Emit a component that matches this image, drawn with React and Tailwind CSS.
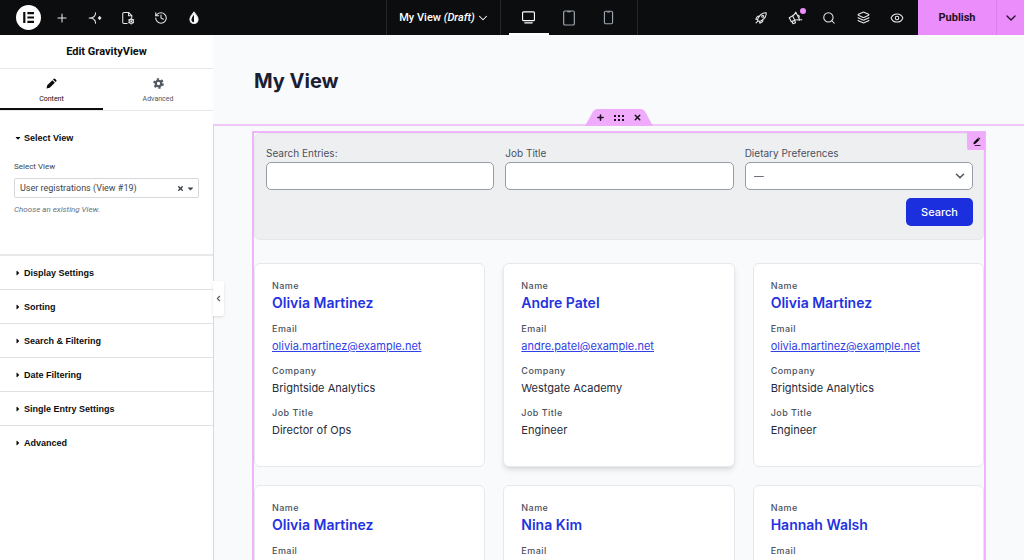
import React from 'react';
import { Plus, ChevronDown, ChevronLeft, X, Search, Layers, Eye, History } from 'lucide-react';
import { FaCaretDown, FaCaretRight } from 'react-icons/fa';

const sections = [
  'Display Settings',
  'Sorting',
  'Search & Filtering',
  'Date Filtering',
  'Single Entry Settings',
  'Advanced',
];

const entries = [
  { name: 'Olivia Martinez', email: 'olivia.martinez@example.net', company: 'Brightside Analytics', job: 'Director of Ops' },
  { name: 'Andre Patel', email: 'andre.patel@example.net', company: 'Westgate Academy', job: 'Engineer', raised: true },
  { name: 'Olivia Martinez', email: 'olivia.martinez@example.net', company: 'Brightside Analytics', job: 'Engineer' },
  { name: 'Olivia Martinez', email: 'olivia.martinez@example.net', company: 'Brightside Analytics', job: 'Engineer' },
  { name: 'Nina Kim', email: 'nina.kim@example.net', company: 'Westgate Academy', job: 'Designer' },
  { name: 'Hannah Walsh', email: 'hannah.walsh@example.net', company: 'Brightside Analytics', job: 'Manager' },
];

function Icon({ className = 'size-[14px]', children }) {
  return (
    <svg
      viewBox="0 0 24 24"
      fill="none"
      stroke="currentColor"
      strokeWidth="1.8"
      strokeLinecap="round"
      strokeLinejoin="round"
      className={className}
      aria-hidden="true"
    >
      {children}
    </svg>
  );
}

function BarButton({ label, width = 'w-[33px]', children }) {
  return (
    <button type="button" aria-label={label} className={`${width} relative flex h-full items-center justify-center text-[#e6e8ea]`}>
      {children}
    </button>
  );
}

function TopBar() {
  return (
    <header className="grid h-[35px] shrink-0 grid-cols-[1fr_auto_1fr] bg-[#0c0d0e]">
      {/* Left tools */}
      <div className="flex items-center pl-3">
        <BarButton label="Elementor menu">
          <svg viewBox="0 0 25 25" className="size-[25px]" aria-hidden="true">
            <circle cx="12.5" cy="12.5" r="12.5" fill="#fff" />
            <path d="M7.2 7h2.2v11H7.2zM11.4 7h6.6v2.2h-6.6zM11.4 11.4h6.6v2.2h-6.6zM11.4 15.8h6.6V18h-6.6z" fill="#0c0d0e" />
          </svg>
        </BarButton>
        <BarButton label="Add element">
          <Plus className="size-[14px]" strokeWidth={1.8} />
        </BarButton>
        <BarButton label="AI">
          <Icon>
            <path d="M13 3c0 5.500-3 9-11 9 8 0 11 3.500 11 9" />
            <path d="M20 9.600l2.200 2.400-2.200 2.400-2.200-2.400z" fill="currentColor" />
          </Icon>
        </BarButton>
        <BarButton label="Page settings">
          <Icon>
            <path d="M10.500 21.500H5a2 2 0 0 1-2-2v-15a2 2 0 0 1 2-2h8l5.500 5.500v3" />
            <path d="M13 2.500V8h5.500" />
            <circle cx="17.500" cy="17.500" r="3.600" />
            <circle cx="17.500" cy="17.500" r=".8" />
            <path d="M17.500 12.600v1.300M17.500 21.100v1.300M13.300 15l1.100.7M20.600 19.300l1.100.7M13.300 20l1.100-.7M20.600 15.700l1.100-.7" />
          </Icon>
        </BarButton>
        <BarButton label="History">
          <History className="size-[14px]" strokeWidth={1.8} />
        </BarButton>
        <BarButton label="Site styles">
          <Icon>
            <path d="M12 2c3.500 4.500 7 8 7 12.500a7 7 0 0 1-14 0C5 10 8.500 6.500 12 2z" fill="#fff" />
            <path d="M12 6.500v12.800a4.300 4.300 0 0 1-4.300-4.600c0-2.700 1.800-5 4.300-8.200z" fill="#0c0d0e" stroke="none" />
          </Icon>
        </BarButton>
      </div>

      {/* Document and devices */}
      <div className="flex border-x border-[#26282b]">
        <button type="button" className="flex items-center gap-px pr-[10px] pl-3 text-[11px] leading-4 font-medium text-white">
          <span>
            My View <em>(Draft)</em>
          </span>
          <ChevronDown className="size-[14px]" strokeWidth={1.8} />
        </button>
        <div className="flex border-l border-[#26282b] px-2">
          <button type="button" aria-label="Desktop" className="flex w-10 items-center justify-center border-y-2 border-t-transparent border-b-white text-white">
            <Icon className="size-[15px]">
              <rect x="2.500" y="3" width="19" height="14" rx="1.500" />
              <path d="M6 20.500h12" />
            </Icon>
          </button>
          <button type="button" aria-label="Tablet" className="flex w-10 items-center justify-center text-[#9da5ae]">
            <Icon className="size-4">
              <rect x="4" y="1.500" width="16" height="21" rx="2" />
              <path d="M10 2.500h4" />
            </Icon>
          </button>
          <button type="button" aria-label="Mobile" className="flex w-10 items-center justify-center text-[#9da5ae]">
            <Icon className="size-[15px]">
              <rect x="5.500" y="2" width="13" height="20" rx="2" />
              <path d="M10.500 3h3" />
            </Icon>
          </button>
        </div>
      </div>

      {/* Right tools */}
      <div className="flex items-center justify-end">
        <BarButton label="Checklist" width="w-[34px]">
          <Icon>
            <path d="M7 12.500C9.500 7 13.500 2.800 21 3c.2 7.500-4 11.500-9.500 14L8.500 18 6 15.500z" />
            <path d="M9.500 9H6L3 14l3.300.5M15 14.500V18l-5 3-.5-3.300M3.500 20.500l3-3" />
            <circle cx="15" cy="9" r="1.800" />
          </Icon>
        </BarButton>
        <BarButton label="What's new" width="w-[34px]">
          <Icon className="size-[15px]">
            <path d="M12.500 3.500l6.500 13c-3-1.300-6.500-1.100-9.500.5l-4.200 1.800-3.300-6.300 4.200-2.400c3-1.700 5.200-3.600 6.300-6.600z" />
            <path d="M7.500 9.500l3.300 6.700M6.500 18.500l1.500 3.500 4-1.500-1.500-4M16.500 8.500a2.500 2.500 0 0 1 1.500 3M20.500 15l1.500.8" />
          </Icon>
          <span className="absolute top-2 right-[6px] size-[6px] rounded-full bg-[#eb8efb]" />
        </BarButton>
        <BarButton label="Finder" width="w-[34px]">
          <Search className="size-[14px]" strokeWidth={1.8} />
        </BarButton>
        <BarButton label="Structure" width="w-[34px]">
          <Layers className="size-[13px]" strokeWidth={2} />
        </BarButton>
        <BarButton label="Preview" width="w-[34px]">
          <Eye className="size-[14px]" strokeWidth={1.8} />
        </BarButton>
        <div className="ml-1 flex h-full bg-[#eb8efb] text-[#1f1023]">
          <button type="button" className="w-[78px] text-[11px] leading-4 font-bold">Publish</button>
          <button type="button" aria-label="Publish options" className="flex w-7 items-center justify-center border-l border-[#dd7df0]">
            <ChevronDown className="size-4" strokeWidth={2} />
          </button>
        </div>
      </div>
    </header>
  );
}

function Sidebar() {
  return (
    <aside className="relative z-10 flex w-[213px] shrink-0 flex-col bg-white text-[#0c0d0e]">
      <h1 className="border-b border-[#e6e8ea] text-center text-[11px] leading-[33px] font-bold">Edit GravityView</h1>
      <div className="flex h-[42px] border-b border-[#e6e8ea] text-[7px] leading-[10px]">
        <button type="button" className="flex w-[103px] flex-col items-center gap-[5px] border-b-2 border-[#0c0d0e] pt-[9px]">
          <svg viewBox="0 0 20 20" className="size-[11px]" fill="currentColor" aria-hidden="true">
            <path d="M1 19l1.200-5.800L11.500 3.900l4.600 4.600-9.300 9.300zM12.700 2.700l1.500-1.500q1-.8 2 0l2.600 2.600q.8 1 0 2l-1.500 1.500z" />
          </svg>
          Content
        </button>
        <button type="button" className="flex flex-1 flex-col items-center gap-[5px] pt-[9px] text-[#515962]">
          <svg viewBox="0 0 20 20" className="size-[11px]" fill="none" stroke="currentColor" aria-hidden="true">
            <circle cx="10" cy="10" r="5" strokeWidth="4" />
            <circle cx="10" cy="10" r="8" strokeWidth="3.400" strokeDasharray="4.200 4.178" />
          </svg>
          Advanced
        </button>
      </div>

      {/* Open section */}
      <section className="h-[145px] shrink-0 border-b-2 border-[#e6e8ea] px-[14px] pt-[19px]">
        <button type="button" className="flex items-center gap-[2px] font-['Liberation_Sans',sans-serif] text-[9px] leading-4 font-bold">
          <FaCaretDown className="size-2" />
          Select View
        </button>
        <label htmlFor="view" className="mt-[15px] block text-[8px] leading-3 text-[#3f444b]">Select View</label>
        <div className="mt-[5px] flex h-5 items-center rounded-xs border border-[#d5d8dc] pr-[3px] text-[#3f444b]">
          <select id="view" className="min-w-0 flex-1 appearance-none pl-[5px] text-[9px] leading-4">
            <option>User registrations (View #19)</option>
          </select>
          <button type="button" aria-label="Clear" className="pr-[2px]">
            <X className="size-[7px]" strokeWidth={5} />
          </button>
          <FaCaretDown className="size-[9px]" />
        </div>
        <p className="mt-[6px] text-[8px] leading-3 text-[#69727d] italic">Choose an existing View.</p>
      </section>

      {sections.map((title, i) => (
        <button
          key={title}
          type="button"
          className={`flex h-[34px] shrink-0 items-center gap-[2px] px-[14px] text-left font-['Liberation_Sans',sans-serif] text-[9px] leading-4 font-bold ${
            i < sections.length - 1 ? 'border-b border-[#dfe2e5]' : ''
          }`}
        >
          <FaCaretRight className="size-2" />
          {title}
        </button>
      ))}

      {/* Collapse handle sits over the canvas */}
      <button
        type="button"
        aria-label="Hide panel"
        className="absolute top-[246px] left-full flex h-[35px] w-[11px] items-center justify-center rounded-r-xs bg-white text-[#515962] shadow-sm"
      >
        <ChevronLeft className="size-[9px]" strokeWidth={3} />
      </button>
    </aside>
  );
}

function SearchForm() {
  return (
    <form className="rounded-md border border-[#e6e8ec] bg-[#eeeff0] pt-3 pr-[10px] pb-[13px] pl-[11px] text-[#4b5160]">
      <div className="grid grid-cols-3 gap-[11px] text-[10px] leading-[14px]">
        <div>
          <label htmlFor="entries">Search Entries:</label>
          <input id="entries" type="text" className="mt-[2px] block h-7 w-full rounded-[5px] border border-[#989ba8] bg-white px-2" />
        </div>
        <div>
          <label htmlFor="job">Job Title</label>
          <input id="job" type="text" className="mt-[2px] block h-7 w-full rounded-[5px] border border-[#989ba8] bg-white px-2" />
        </div>
        <div>
          <label htmlFor="diet">Dietary Preferences</label>
          <div className="relative mt-[2px]">
            <select id="diet" className="block h-7 w-full appearance-none rounded-[5px] border border-[#989ba8] bg-white px-2">
              <option>—</option>
            </select>
            <ChevronDown className="pointer-events-none absolute top-[7px] right-[6px] size-[14px]" strokeWidth={2.5} />
          </div>
        </div>
      </div>
      <div className="mt-2 flex justify-end">
        <button type="button" className="h-7 w-[67px] rounded-[5px] bg-[#1b2fdf] text-[11px] font-medium text-white">Search</button>
      </div>
    </form>
  );
}

function Field({ label, children }) {
  return (
    <div className="text-[11px] leading-5">
      <dt className="text-[9px] leading-[14px] font-medium tracking-wider text-[#4b5160]">{label}</dt>
      <dd>{children}</dd>
    </div>
  );
}

function EntryCard({ entry }) {
  return (
    <article className={`rounded-md border border-[#e6e8ee] bg-white px-[17px] pt-[15px] pb-[26px] text-[#252b3b] ${entry.raised ? 'shadow-md' : ''}`}>
      <dl className="flex flex-col gap-2">
        <Field label="Name">
          <a href="#entry" className="block pb-px text-[14px] leading-5 font-semibold text-[#1f33e0]">{entry.name}</a>
        </Field>
        <Field label="Email">
          <a href="#email" className="text-[#2f40e4] underline">{entry.email}</a>
        </Field>
        <Field label="Company">{entry.company}</Field>
        <Field label="Job Title">{entry.job}</Field>
      </dl>
    </article>
  );
}

function Canvas() {
  return (
    <main className="flex min-w-0 flex-1 flex-col overflow-hidden bg-[#f9fafc] font-[Inter,sans-serif]">
      <h2 className="pt-8 pb-[29px] pl-[41px] text-[20px] leading-7 font-bold text-[#1a2033]">My View</h2>
      <div className="relative flex-1 border-t-2 border-l border-[#efc8f8] px-[38px] pt-[5px]">
        {/* Container handle */}
        <div className="absolute bottom-full left-1/2 h-[17px] w-[68px] -translate-x-1/2 text-[#1f1023]">
          <svg viewBox="0 0 68 17" className="absolute inset-0" aria-hidden="true">
            <path d="M0 17L8 2.500Q9.500 0 12 0H56Q58.500 0 60 2.500L68 17z" fill="#f0abfc" />
          </svg>
          <div className="relative flex h-full items-center justify-center gap-[9px]">
            <button type="button" aria-label="Add container">
              <Plus className="size-[9px]" strokeWidth={4} />
            </button>
            <button type="button" aria-label="Edit container">
              <svg viewBox="0 0 10 6" className="h-[6px] w-[10px]" fill="currentColor" aria-hidden="true">
                <path d="M0 0h2v2H0zM4 0h2v2H4zM8 0h2v2H8zM0 4h2v2H0zM4 4h2v2H4zM8 4h2v2H8z" />
              </svg>
            </button>
            <button type="button" aria-label="Delete container">
              <X className="size-[9px]" strokeWidth={4} />
            </button>
          </div>
        </div>

        <div className="relative h-full border-2 border-b-0 border-[#efb4fa]">
          <button type="button" aria-label="Edit GravityView" className="absolute -top-px -right-px flex size-[18px] items-center justify-center rounded-bl-xs bg-[#f0abfc] text-black">
            <svg viewBox="0 0 10 10" className="size-[9px]" fill="currentColor" aria-hidden="true">
              <path d="M1.500 8L2 5.700 6.300 1.400 8.100 3.200 3.800 7.500zM6.800 1l.7-.7 1.800 1.800-.7.700zM3 9h6.500v.8H3z" />
            </svg>
          </button>
          <SearchForm />
          <div className="mt-[23px] grid grid-cols-3 gap-[18px]">
            {entries.map((entry, i) => (
              <EntryCard key={i} entry={entry} />
            ))}
          </div>
        </div>
      </div>
    </main>
  );
}

function App() {
  return (
    <div className="flex h-screen flex-col overflow-hidden font-[Roboto,sans-serif]">
      <TopBar />
      <div className="flex min-h-0 flex-1">
        <Sidebar />
        <Canvas />
      </div>
    </div>
  );
}

export default App;
